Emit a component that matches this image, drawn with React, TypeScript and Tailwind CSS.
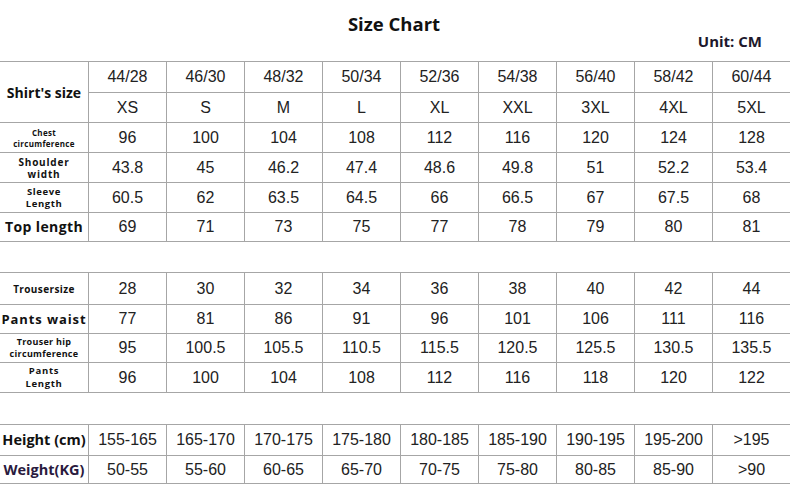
import React from "react";

const cols = "grid grid-cols-[89px_repeat(8,78px)_1fr]";
const data = "font-['Liberation_Sans',Arial,sans-serif] text-[16px] text-[#222]";
const lab = "font-['Open_Sans','Noto_Sans',sans-serif] font-bold text-[#111]";

function Cell({ children, last, cls = "" }: { children?: React.ReactNode; last?: boolean; cls?: string }) {
  return (
    <div
      className={`flex items-center justify-center border-b border-[#a6a6a6] ${last ? "" : "border-r"} ${cls}`}
    >
      {children}
    </div>
  );
}

function DataRow({ label, values, h, labelCls }: { label: React.ReactNode; values: string[]; h: string; labelCls: string }) {
  return (
    <div className={`${cols} ${h}`}>
      <Cell cls={`${lab} ${labelCls} text-center`}>{label}</Cell>
      {values.map((v, i) => (
        <Cell key={i} last={i === values.length - 1} cls={data}>
          {v}
        </Cell>
      ))}
    </div>
  );
}

export default function App() {
  const sizesA = ["44/28", "46/30", "48/32", "50/34", "52/36", "54/38", "56/40", "58/42", "60/44"];
  const sizesB = ["XS", "S", "M", "L", "XL", "XXL", "3XL", "4XL", "5XL"];
  return (
    <div className="w-[790px] h-[496px] bg-white overflow-hidden">
      {/* header */}
      <div className="relative h-[61px]">
        <div className={`${lab} text-[18.5px] text-center pt-[11px] leading-[26px] pr-[2px]`}>Size Chart</div>
        <div className={`${lab} absolute right-[28px] top-[31px] text-[15px] text-[#20182c] leading-[20px]`}>Unit: CM</div>
      </div>

      {/* shirt table */}
      <div className="border-t border-[#a6a6a6]">
        <div className={`${cols} grid-rows-[31px_30px]`}>
          <div className={`row-span-2 flex items-center justify-center border-r border-b border-[#a6a6a6] ${lab} text-[14px]`}>
            Shirt's size
          </div>
          {sizesA.map((v, i) => (
            <Cell key={"a" + i} last={i === 8} cls={data}>
              {v}
            </Cell>
          ))}
          {sizesB.map((v, i) => (
            <Cell key={"b" + i} last={i === 8} cls={data}>
              {v}
            </Cell>
          ))}
        </div>
        <DataRow
          h="h-[30px]"
          labelCls="text-[8px] tracking-[0.3px] leading-[11px]"
          label={<span>Chest<br />circumference</span>}
          values={["96", "100", "104", "108", "112", "116", "120", "124", "128"]}
        />
        <DataRow
          h="h-[30px]"
          labelCls="text-[10px] tracking-[0.8px] leading-[12px]"
          label={<span>Shoulder<br />width</span>}
          values={["43.8", "45", "46.2", "47.4", "48.6", "49.8", "51", "52.2", "53.4"]}
        />
        <DataRow
          h="h-[30px]"
          labelCls="text-[9.5px] tracking-[0.6px] leading-[11.5px]"
          label={<span>Sleeve<br />Length</span>}
          values={["60.5", "62", "63.5", "64.5", "66", "66.5", "67", "67.5", "68"]}
        />
        <DataRow
          h="h-[29px]"
          labelCls="text-[14px] tracking-[0.4px] leading-[18px]"
          label="Top length"
          values={["69", "71", "73", "75", "77", "78", "79", "80", "81"]}
        />
      </div>

      <div className="h-[30px]" />

      {/* trouser table */}
      <div className="border-t border-[#a6a6a6]">
        <DataRow
          h="h-[32px]"
          labelCls="text-[10px] tracking-[0.4px] leading-[14px]"
          label="Trousersize"
          values={["28", "30", "32", "34", "36", "38", "40", "42", "44"]}
        />
        <DataRow
          h="h-[29px]"
          labelCls="text-[13px] tracking-[0.9px] leading-[18px]"
          label="Pants waist"
          values={["77", "81", "86", "91", "96", "101", "106", "111", "116"]}
        />
        <DataRow
          h="h-[29px]"
          labelCls="text-[9px] tracking-[0.3px] leading-[12px]"
          label={<span>Trouser hip<br />circumference</span>}
          values={["95", "100.5", "105.5", "110.5", "115.5", "120.5", "125.5", "130.5", "135.5"]}
        />
        <DataRow
          h="h-[30px]"
          labelCls="text-[9.5px] tracking-[0.7px] leading-[12.5px]"
          label={<span>Pants<br />Length</span>}
          values={["96", "100", "104", "108", "112", "116", "118", "120", "122"]}
        />
      </div>

      <div className="h-[31px]" />

      {/* height/weight table */}
      <div className="border-t border-[#a6a6a6]">
        <DataRow
          h="h-[31px]"
          labelCls="text-[14.5px] leading-[20px]"
          label="Height (cm)"
          values={["155-165", "165-170", "170-175", "175-180", "180-185", "185-190", "190-195", "195-200", ">195"]}
        />
        <DataRow
          h="h-[28px]"
          labelCls="text-[14.5px] leading-[20px] !text-[#2a1a3e]"
          label="Weight(KG)"
          values={["50-55", "55-60", "60-65", "65-70", "70-75", "75-80", "80-85", "85-90", ">90"]}
        />
      </div>
    </div>
  );
}
